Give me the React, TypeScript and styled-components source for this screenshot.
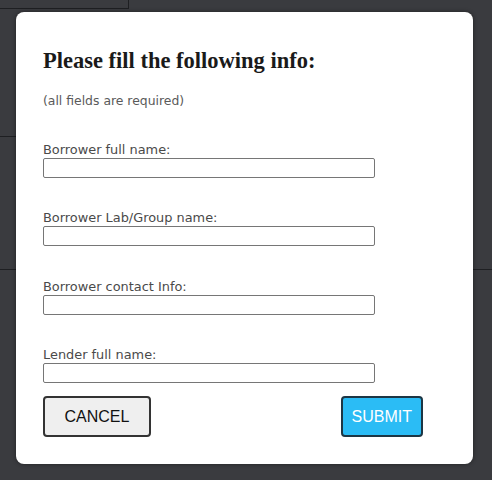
import React from 'react'
import styled, { createGlobalStyle } from 'styled-components'

const fields = [
  'Borrower full name:',
  'Borrower Lab/Group name:',
  'Borrower contact Info:',
  'Lender full name:',
]

const GlobalStyle = createGlobalStyle`
  html, body {
    margin: 0;
    padding: 0;
    background: #3a3b3f;
  }
  body {
    font-family: 'DejaVu Sans', 'Open Sans', sans-serif;
  }
`

export default function App() {
  return (
    <>
      <GlobalStyle />
      <Page>
        <TopBox />
        <Band $height={127} $width="50%" />
        <Band $height={132} $width="100%" />
      </Page>
      <Modal role="dialog" aria-labelledby="info-title">
        <Title id="info-title">Please fill the following info:</Title>
        <Note>(all fields are required)</Note>
        <Form>
          {fields.map((f) => (
            <Field key={f}>
              <Label>{f}</Label>
              <Input type="text" />
            </Field>
          ))}
        </Form>
        <Actions>
          <Button type="button">CANCEL</Button>
          <Button type="submit" $primary>
            SUBMIT
          </Button>
        </Actions>
      </Modal>
    </>
  )
}

const Page = styled.div`
  width: 492px;
  height: 480px;
  display: flex;
  flex-direction: column;
`

const TopBox = styled.div`
  width: 128px;
  height: 8px;
  border-right: 1px solid #1e1f22;
  border-bottom: 1px solid #1e1f22;
`

const Band = styled.div<{ $height: number; $width: string }>`
  width: ${(p) => p.$width};
  height: ${(p) => p.$height}px;
  border-bottom: 1px solid #1e1f22;
`

const Modal = styled.div`
  position: absolute;
  left: 16px;
  top: 12px;
  width: 457px;
  height: 452px;
  box-sizing: border-box;
  background: #fff;
  border-radius: 8px;
  box-shadow: 0 0 4px rgba(0, 0, 0, 0.45);
  padding: 35px 27px 0;
  display: flex;
  flex-direction: column;
`

const Title = styled.h2`
  margin: 0;
  font-family: 'Liberation Serif', 'Times New Roman', serif;
  font-weight: bold;
  font-size: 22.5px;
  line-height: 28px;
  color: #1a1a1a;
`

const Note = styled.p`
  margin: 17.5px 0 0;
  font-size: 12.4px;
  line-height: 16px;
  color: #5a5a5a;
`

const Form = styled.div`
  margin-top: 33px;
  display: flex;
  flex-direction: column;
  gap: 32.5px;
`

const Field = styled.label`
  display: flex;
  flex-direction: column;
`

const Label = styled.span`
  font-size: 12.9px;
  line-height: 16px;
  color: #4a4a4a;
`

const Input = styled.input`
  box-sizing: border-box;
  width: 332px;
  height: 20px;
  margin: 0;
  padding: 0 4px;
  border: 1px solid #767676;
  border-radius: 2px;
  background: #fff;
`

const Actions = styled.div`
  margin-top: 13px;
  width: 380px;
  display: flex;
  justify-content: space-between;
`

const Button = styled.button<{ $primary?: boolean }>`
  height: 41px;
  padding: 0 ${(p) => (p.$primary ? 9 : 19.5)}px;
  box-sizing: border-box;
  border: 2px solid ${(p) => (p.$primary ? '#1d3644' : '#333')};
  border-radius: 4px;
  background: ${(p) => (p.$primary ? '#2bbcf5' : '#efefef')};
  color: ${(p) => (p.$primary ? '#fff' : '#111')};
  font-family: 'Liberation Sans', Arial, sans-serif;
  font-size: 16px;
  cursor: pointer;
`
